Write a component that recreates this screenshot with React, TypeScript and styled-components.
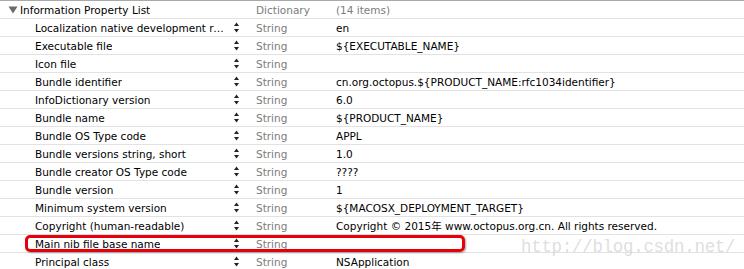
import React from "react";
import styled, { createGlobalStyle } from "styled-components";

const Global = createGlobalStyle`
  html, body { margin: 0; padding: 0; background: #fff; }
  body { font-family: "DejaVu Sans", "Noto Sans CJK SC", sans-serif; }
`;

const Table = styled.div`
  position: relative;
  width: 744px;
  height: 269px;
  overflow: hidden;
  border-top: 1px solid #a9a9a9;
  box-sizing: border-box;
  font-size: 10.5px;
  color: #000;
`;

const Row = styled.div`
  display: grid;
  grid-template-columns: 230px 26px 80px 1fr;
  height: 18px;
  box-sizing: border-box;
  border-bottom: 1px solid #e2e2e2;
  align-items: center;
  position: relative;
`;

const KeyCell = styled.div<{ $header?: boolean }>`
  padding-left: ${(p) => (p.$header ? "8px" : "35px")};
  display: flex;
  align-items: center;
  white-space: nowrap;
  overflow: hidden;
  padding-right: 4px;
`;

const KeyText = styled.span`
  overflow: hidden;
  text-overflow: ellipsis;
  white-space: nowrap;
`;

const Disclosure = styled.svg`
  width: 10px;
  height: 8px;
  margin-right: 2px;
  flex: none;
`;

const StepperCell = styled.div`
  display: flex;
  align-items: center;
  padding-left: 3px;
  height: 100%;
`;

const TypeCell = styled.div`
  color: #7c7c7c;
  white-space: nowrap;
`;

const ValueCell = styled.div`
  white-space: nowrap;
`;

const HeaderValue = styled.div`
  color: #7c7c7c;
  white-space: nowrap;
`;

const Highlight = styled.div`
  position: absolute;
  left: 25px;
  top: 234px;
  width: 440px;
  height: 17px;
  border: 3px solid #e5000a;
  border-radius: 5px;
  box-sizing: border-box;
  box-shadow: 1px 1px 2px rgba(0, 0, 0, 0.35);
  pointer-events: none;
`;

const Watermark = styled.div`
  position: absolute;
  left: 521px;
  top: 236px;
  font-family: "Liberation Mono", monospace;
  font-size: 17.5px;
  color: rgba(170, 170, 170, 0.4);
  letter-spacing: -0.3px;
  white-space: nowrap;
  pointer-events: none;
`;

const Stepper = () => (
  <svg width="7" height="13" viewBox="0 0 7 13">
    <path d="M3.5 1.5 L6 5 L1 5 Z" fill="#222" />
    <path d="M1 8 L6 8 L3.5 11.5 Z" fill="#222" />
  </svg>
);

const rows: [string, string][] = [
  ["Localization native development region", "en"],
  ["Executable file", "${EXECUTABLE_NAME}"],
  ["Icon file", ""],
  ["Bundle identifier", "cn.org.octopus.${PRODUCT_NAME:rfc1034identifier}"],
  ["InfoDictionary version", "6.0"],
  ["Bundle name", "${PRODUCT_NAME}"],
  ["Bundle OS Type code", "APPL"],
  ["Bundle versions string, short", "1.0"],
  ["Bundle creator OS Type code", "????"],
  ["Bundle version", "1"],
  ["Minimum system version", "${MACOSX_DEPLOYMENT_TARGET}"],
  ["Copyright (human-readable)", "Copyright © 2015年 www.octopus.org.cn. All rights reserved."],
  ["Main nib file base name", ""],
  ["Principal class", "NSApplication"],
];

export default function App() {
  return (
    <>
      <Global />
      <Table>
        <Row>
          <KeyCell $header>
            <Disclosure viewBox="0 0 10 8">
              <path d="M0.5 0.5 L9.5 0.5 L5 7.5 Z" fill="#6b6b6b" />
            </Disclosure>
            <KeyText>Information Property List</KeyText>
          </KeyCell>
          <StepperCell />
          <TypeCell>Dictionary</TypeCell>
          <HeaderValue>(14 items)</HeaderValue>
        </Row>
        {rows.map(([k, v]) => (
          <Row key={k}>
            <KeyCell>
              <KeyText>{k}</KeyText>
            </KeyCell>
            <StepperCell>
              <Stepper />
            </StepperCell>
            <TypeCell>String</TypeCell>
            <ValueCell>{v}</ValueCell>
          </Row>
        ))}
        <Highlight />
        <Watermark>http://blog.csdn.net/</Watermark>
      </Table>
    </>
  );
}
